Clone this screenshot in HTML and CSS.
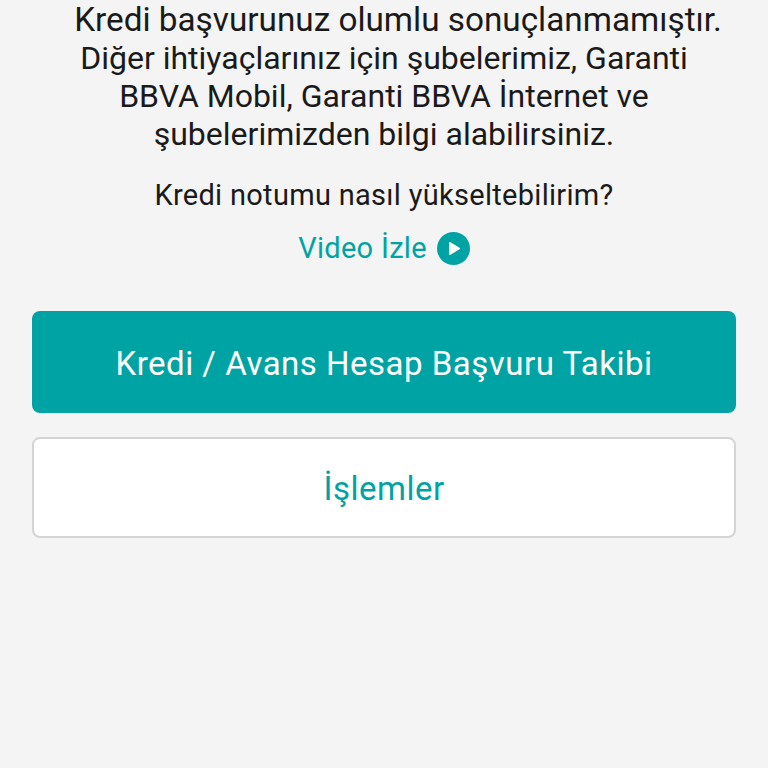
FILE: index.html
```html
<!DOCTYPE html>
<html lang="tr">
<head>
    <meta charset="UTF-8">
    <title>Kredi Başvuru Sonucu</title>
    <link rel="stylesheet" href="styles.css">
</head>
<body>
    <div class="container">
        <p class="message"><span class="first-line">Kredi başvurunuz olumlu sonuçlanmamıştır.</span><br>Diğer ihtiyaçlarınız için şubelerimiz, Garanti<br>BBVA Mobil, Garanti BBVA İnternet ve<br>şubelerimizden bilgi alabilirsiniz.</p>
        <p class="question">Kredi notumu nasıl yükseltebilirim?</p>
        <a class="video" href="#">Video İzle
            <svg class="play" width="33" height="33" viewBox="0 0 33 33"><circle cx="16.5" cy="16.5" r="16.5" fill="#00a3a3"/><path d="M13 11v11l9-5.500z" fill="#fff" stroke="#fff" stroke-width="2" stroke-linejoin="round"/></svg>
        </a>
        <button class="btn btn-primary">Kredi / Avans Hesap Başvuru Takibi</button>
        <button class="btn btn-secondary">İşlemler</button>
    </div>
</body>
</html>
```

FILE: styles.css
```css
html, body{
    margin: 0;
    height: 100%;
}

body{
    background: #f4f4f4;
    font-family: "Roboto", sans-serif;
    color: #1a1a1a;
    overflow: hidden;
}

.container{
    display: flex;
    flex-direction: column;
    align-items: center;
    padding: 1px 32px 0;
}

.message{
    margin: 0;
    font-size: 32px;
    line-height: 38px;
    text-align: center;
    white-space: nowrap;
}

.first-line{
    padding-left: 28px;
    font-size: 33.3px;
}

.question{
    margin: 23px 0 0;
    font-size: 29px;
    line-height: 39px;
    letter-spacing: 0.3px;
    text-align: center;
}

.video{
    display: flex;
    align-items: center;
    gap: 10px;
    margin-top: 14px;
    font-size: 29px;
    line-height: 39px;
    letter-spacing: 0.3px;
    color: #00a3a3;
    text-decoration: none;
}

.play{
    margin-top: -1px;
}

.btn{
    display: block;
    width: 100%;
    height: 102px;
    padding-top: 3px;
    border-radius: 8px;
    font-family: inherit;
    font-size: 33px;
    letter-spacing: 0.5px;
}

.btn-primary{
    margin-top: 43px;
    background: #00a3a3;
    border: none;
    color: #fff;
}

.btn-secondary{
    margin-top: 24px;
    height: 101px;
    background: #fff;
    border: 2px solid #d4d4d4;
    color: #00a3a3;
}
```
